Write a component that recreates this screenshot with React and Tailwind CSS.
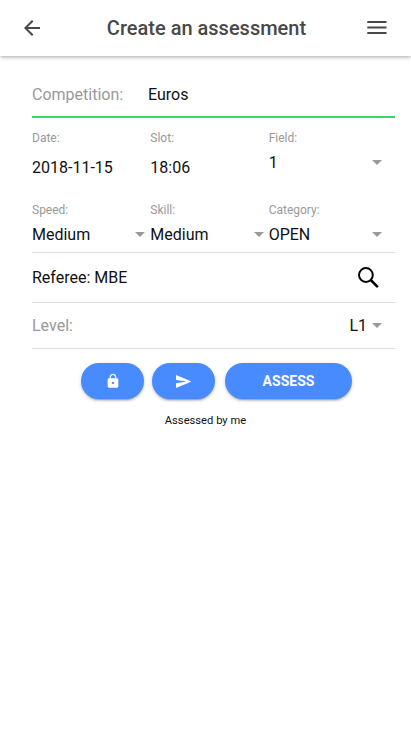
const LABEL = "block text-xs leading-[14px] text-[#999]";

function Caret() {
  return <span className="h-0 w-0 border-x-[5px] border-t-[5px] border-x-transparent border-t-[#999]" />;
}

function SelectField({ label, value }) {
  return (
    <div>
      <span className={LABEL}>{label}</span>
      <div className="mt-2 flex h-[19px] items-center justify-between pr-[5px]">
        <span>{value}</span>
        <Caret />
      </div>
    </div>
  );
}

function DateField({ label, value }) {
  return (
    <div>
      <span className={LABEL}>{label}</span>
      <span className="mt-[13px] block leading-[19px]">{value}</span>
    </div>
  );
}

const BUTTON =
  "flex h-9 items-center justify-center rounded-full bg-[#488aff] text-white shadow-[0_2px_2px_0_rgba(0,0,0,0.14),0_3px_1px_-2px_rgba(0,0,0,0.2),0_1px_5px_0_rgba(0,0,0,0.12)]";

export default function App() {
  return (
    <div className="min-h-[731px] w-[411px] overflow-hidden bg-white font-['Roboto',sans-serif] text-base leading-[19px] text-[#111]">
      <header className="flex h-14 items-center bg-white pl-5 pr-[22px] text-[#484848] shadow-[0_1px_4px_rgba(0,0,0,0.35)]">
        <button aria-label="Back" className="h-6 w-6">
          <svg viewBox="0 0 24 24" className="h-6 w-6" fill="currentColor">
            <path d="M20 11H7.83l5.59-5.59L12 4l-8 8 8 8 1.41-1.41L7.83 13H20v-2z" />
          </svg>
        </button>
        <h1 className="flex-1 pl-1 text-center text-xl font-medium leading-6">Create an assessment</h1>
        <button aria-label="Menu" className="h-6 w-6">
          <svg viewBox="0 0 24 24" className="h-6 w-6" fill="currentColor">
            <path d="M2.3 5h19.2v2H2.3zM2.3 10.6h19.2v2H2.3zM2.3 16.1h19.2v2H2.3z" />
          </svg>
        </button>
      </header>

      <main className="pl-8 pr-4">
        <div className="mt-4 flex h-[46px] items-center border-b-2 border-[#32db64] pt-px">
          <span className="w-[116px] text-[#999]">Competition:</span>
          <span>Euros</span>
        </div>

        <div className="grid h-[134px] grid-cols-3 grid-rows-[72px_1fr] pr-2 pt-[13px]">
          <DateField label="Date:" value="2018-11-15" />
          <DateField label="Slot:" value="18:06" />
          <SelectField label="Field:" value="1" />
          <SelectField label="Speed:" value="Medium" />
          <SelectField label="Skill:" value="Medium" />
          <SelectField label="Category:" value="OPEN" />
        </div>

        <div className="flex h-[51px] items-center justify-between border-y border-[#dedede] pr-4">
          <span>Referee: MBE</span>
          <svg viewBox="0 0 22 22" className="h-[22px] w-[22px]" fill="none" stroke="black">
            <circle cx="8.9" cy="8" r="6.9" strokeWidth="2" />
            <path d="M13.7 13L20.9 20.2" strokeWidth="2.5" />
          </svg>
        </div>

        <div className="flex h-[46px] items-center justify-between border-b border-[#dedede] pr-[13px]">
          <span className="text-[#999]">Level:</span>
          <span className="flex items-center gap-[5px]">
            L1
            <Caret />
          </span>
        </div>
      </main>

      <div className="mt-3.5 flex pl-[81px]">
        <button aria-label="Lock" className={`${BUTTON} w-[63px]`}>
          <svg viewBox="0 0 24 24" className="h-4 w-4" fill="currentColor">
            <path d="M18 8h-1V6c0-2.76-2.24-5-5-5S7 3.24 7 6v2H6c-1.1 0-2 .9-2 2v10c0 1.1.9 2 2 2h12c1.1 0 2-.9 2-2V10c0-1.1-.9-2-2-2zm-6 8.7a1.7 1.7 0 1 1 0-3.4 1.7 1.7 0 0 1 0 3.4zM15.1 8H8.9V6c0-1.71 1.39-3.1 3.1-3.1s3.1 1.39 3.1 3.1v2z" />
          </svg>
        </button>
        <button aria-label="Send" className={`${BUTTON} ml-2 w-[63px]`}>
          <svg viewBox="0 0 416 352" className="h-[13px] w-[15.4px]" fill="currentColor">
            <path d="M0 352L416 176 0 0v132l290 44L0 220z" />
          </svg>
        </button>
        <button className={`${BUTTON} ml-2.5 w-[127px] text-sm font-bold`}>ASSESS</button>
      </div>
      <p className="mt-[15px] text-center text-[11.2px] leading-[14px]">Assessed by me</p>
    </div>
  );
}
